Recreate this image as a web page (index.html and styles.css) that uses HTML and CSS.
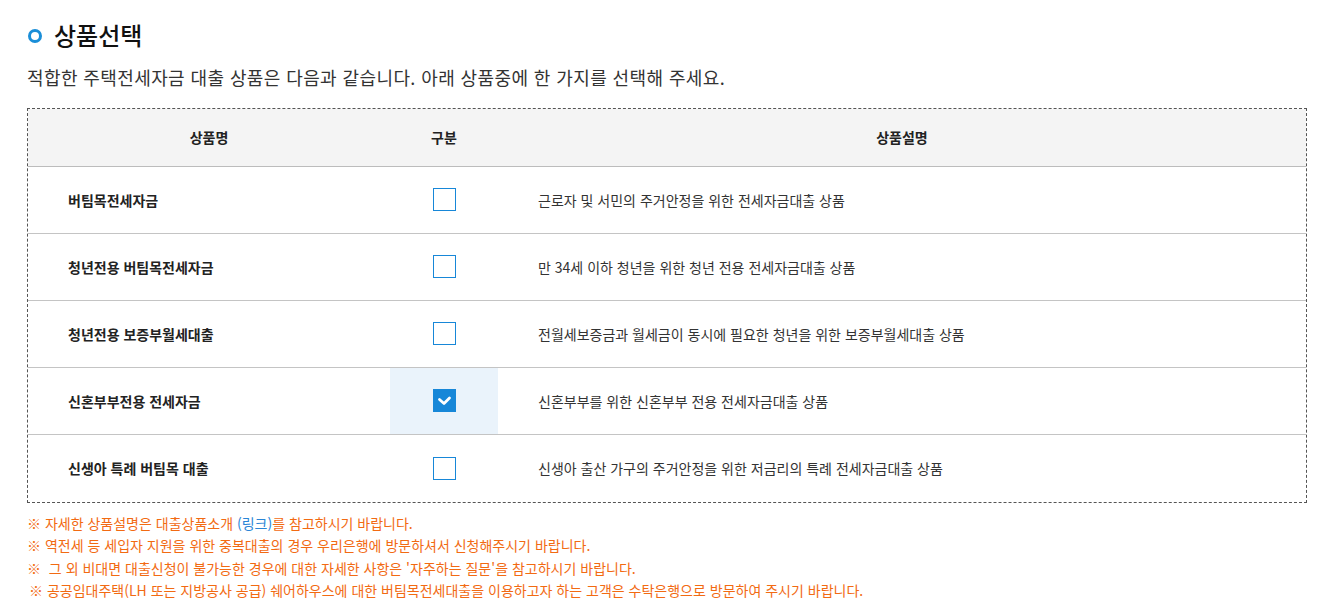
FILE: index.html
```html
<!DOCTYPE html>
<html lang="ko">
<head>
<meta charset="utf-8">
<title>상품선택</title>
<link rel="stylesheet" href="styles.css">
</head>
<body>
<div class="page">
  <h2 class="title"><span class="ring"></span>상품선택</h2>
  <p class="lead">적합한 주택전세자금 대출 상품은 다음과 같습니다. 아래 상품중에 한 가지를 선택해 주세요.</p>
  <div class="box">
    <table class="grid">
      <colgroup><col class="c1"><col class="c2"><col class="c3"></colgroup>
      <thead>
        <tr><th>상품명</th><th>구분</th><th>상품설명</th></tr>
      </thead>
      <tbody>
        <tr><td class="name">버팀목전세자금</td><td class="chk"><span class="cb"></span></td><td class="desc">근로자 및 서민의 주거안정을 위한 전세자금대출 상품</td></tr>
        <tr><td class="name">청년전용 버팀목전세자금</td><td class="chk"><span class="cb"></span></td><td class="desc">만 34세 이하 청년을 위한 청년 전용 전세자금대출 상품</td></tr>
        <tr><td class="name">청년전용 보증부월세대출</td><td class="chk"><span class="cb"></span></td><td class="desc">전월세보증금과 월세금이 동시에 필요한 청년을 위한 보증부월세대출 상품</td></tr>
        <tr><td class="name">신혼부부전용 전세자금</td><td class="chk on"><span class="cb checked"><svg viewBox="0 0 23 23" width="23" height="23"><polyline points="6.5,10.5 11,14.5 16.5,9" fill="none" stroke="#fff" stroke-width="2.8" stroke-linecap="round" stroke-linejoin="round"/></svg></span></td><td class="desc">신혼부부를 위한 신혼부부 전용 전세자금대출 상품</td></tr>
        <tr><td class="name">신생아 특례 버팀목 대출</td><td class="chk"><span class="cb"></span></td><td class="desc">신생아 출산 가구의 주거안정을 위한 저금리의 특례 전세자금대출 상품</td></tr>
      </tbody>
    </table>
  </div>
  <ul class="notes">
    <li>※ 자세한 상품설명은 대출상품소개 <span class="link">(링크)</span>를 참고하시기 바랍니다.</li>
    <li>※ 역전세 등 세입자 지원을 위한 중복대출의 경우 우리은행에 방문하셔서 신청해주시기 바랍니다.</li>
    <li>※&nbsp; 그 외 비대면 대출신청이 불가능한 경우에 대한 자세한 사항은 '자주하는 질문'을 참고하시기 바랍니다.</li>
    <li class="indent">※ 공공임대주택(LH 또는 지방공사 공급) 쉐어하우스에 대한 버팀목전세대출을 이용하고자 하는 고객은 수탁은행으로 방문하여 주시기 바랍니다.</li>
  </ul>
</div>
</body>
</html>
```

FILE: styles.css
```css
* { box-sizing: border-box; }
html, body { margin: 0; padding: 0; background: #fff; }
body {
  font-family: "Noto Sans CJK KR", "Noto Sans", sans-serif;
  color: #222;
}
.page { padding: 18px 32px 0 27px; }
.title {
  margin: 0;
  display: flex;
  align-items: center;
  font-size: 24px;
  font-weight: 500;
  line-height: 34px;
  height: 34px;
  color: #111;
}
.ring {
  width: 14px;
  height: 14px;
  border: 3px solid #1a8ed8;
  border-radius: 50%;
  margin: 1px 12px 0 1px;
  flex: none;
}
.lead {
  margin: 12px 0 0 0;
  font-size: 18px;
  line-height: 26px;
  color: #333;
  letter-spacing: 0.4px;
}
.box {
  margin-top: 18px;
  width: 1280px;
  border: 1px dashed #555;
}
.grid {
  width: 100%;
  border-collapse: collapse;
  table-layout: fixed;
  font-size: 14px;
}
.c1 { width: 362px; }
.c2 { width: 108px; }
.grid th {
  height: 57px;
  background: #f4f4f4;
  font-weight: 700;
  color: #222;
  border-bottom: 1px solid #bcbcbc;
  padding: 0;
  text-align: center;
}
.grid td {
  height: 67px;
  padding: 0;
  border-bottom: 1px solid #c4c4c4;
  vertical-align: middle;
}
.grid tbody tr:last-child td { border-bottom: 0; height: 68px; }
.name { padding-left: 40px !important; font-weight: 700; color: #222; }
.desc { padding-left: 40px !important; color: #333; }
.chk { text-align: center; }
.chk.on { background: #eaf3fb; }
.cb {
  display: inline-block;
  width: 23px;
  height: 23px;
  border: 1px solid #1787d8;
  background: #fff;
  vertical-align: middle;
  margin-top: -1px;
}
.cb.checked { background: #1787d8; border-color: #1787d8; }
.cb svg { display: block; margin: -1px; }
.notes {
  list-style: none;
  margin: 9px 0 0 0;
  padding: 0;
  font-size: 14px;
  line-height: 22.4px;
  color: #f26a12;
}
.notes li.indent { padding-left: 2px; }
.link { color: #2a85d6; }
```
